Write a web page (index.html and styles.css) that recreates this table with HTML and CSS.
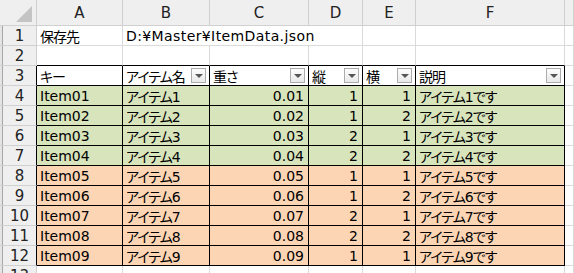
FILE: index.html
```html
<!DOCTYPE html>
<html lang="ja">
<head>
    <meta charset="utf-8">
    <title>ItemData</title>
    <link rel="stylesheet" href="styles.css">
</head>
<body>
    <div class="sheet">
        <!-- column headers -->
        <div class="corner">
            <svg width="16" height="16" viewBox="0 0 16 16"><polygon points="16,0 16,16 0,16" fill="#c4c4c4"/></svg>
        </div>
        <div class="col-head">A</div>
        <div class="col-head">B</div>
        <div class="col-head">C</div>
        <div class="col-head">D</div>
        <div class="col-head">E</div>
        <div class="col-head">F</div>
        <div class="col-head"></div>

        <!-- row 1: path -->
        <div class="row-head">1</div>
        <div class="cell jp">保存先</div>
        <div class="cell span3 path">D:¥Master¥ItemData.json</div>
        <div class="cell"></div>
        <div class="cell"></div>
        <div class="cell"></div>

        <!-- row 2 -->
        <div class="row-head">2</div>
        <div class="cell above"></div>
        <div class="cell above"></div>
        <div class="cell above"></div>
        <div class="cell above"></div>
        <div class="cell above"></div>
        <div class="cell above"></div>
        <div class="cell"></div>

        <!-- row 3: table header -->
        <div class="row-head tbl-edge">3</div>
        <div class="cell t jp">キー</div>
        <div class="cell t jp">アイテム名<span class="filter"></span></div>
        <div class="cell t jp">重さ<span class="filter"></span></div>
        <div class="cell t jp">縦<span class="filter"></span></div>
        <div class="cell t jp">横<span class="filter"></span></div>
        <div class="cell t jp">説明<span class="filter"></span></div>
        <div class="cell"></div>

        <div class="row-head tbl-edge">4</div>
        <div class="cell t green">Item01</div>
        <div class="cell t green jp">アイテム1</div>
        <div class="cell t green num">0.01</div>
        <div class="cell t green num">1</div>
        <div class="cell t green num">1</div>
        <div class="cell t green jp">アイテム1です</div>
        <div class="cell"></div>

        <div class="row-head tbl-edge">5</div>
        <div class="cell t green">Item02</div>
        <div class="cell t green jp">アイテム2</div>
        <div class="cell t green num">0.02</div>
        <div class="cell t green num">1</div>
        <div class="cell t green num">2</div>
        <div class="cell t green jp">アイテム2です</div>
        <div class="cell"></div>

        <div class="row-head tbl-edge">6</div>
        <div class="cell t green">Item03</div>
        <div class="cell t green jp">アイテム3</div>
        <div class="cell t green num">0.03</div>
        <div class="cell t green num">2</div>
        <div class="cell t green num">1</div>
        <div class="cell t green jp">アイテム3です</div>
        <div class="cell"></div>

        <div class="row-head tbl-edge">7</div>
        <div class="cell t green">Item04</div>
        <div class="cell t green jp">アイテム4</div>
        <div class="cell t green num">0.04</div>
        <div class="cell t green num">2</div>
        <div class="cell t green num">2</div>
        <div class="cell t green jp">アイテム4です</div>
        <div class="cell"></div>

        <div class="row-head tbl-edge">8</div>
        <div class="cell t orange">Item05</div>
        <div class="cell t orange jp">アイテム5</div>
        <div class="cell t orange num">0.05</div>
        <div class="cell t orange num">1</div>
        <div class="cell t orange num">1</div>
        <div class="cell t orange jp">アイテム5です</div>
        <div class="cell"></div>

        <div class="row-head tbl-edge">9</div>
        <div class="cell t orange">Item06</div>
        <div class="cell t orange jp">アイテム6</div>
        <div class="cell t orange num">0.06</div>
        <div class="cell t orange num">1</div>
        <div class="cell t orange num">2</div>
        <div class="cell t orange jp">アイテム6です</div>
        <div class="cell"></div>

        <div class="row-head tbl-edge">10</div>
        <div class="cell t orange">Item07</div>
        <div class="cell t orange jp">アイテム7</div>
        <div class="cell t orange num">0.07</div>
        <div class="cell t orange num">2</div>
        <div class="cell t orange num">1</div>
        <div class="cell t orange jp">アイテム7です</div>
        <div class="cell"></div>

        <div class="row-head tbl-edge">11</div>
        <div class="cell t orange">Item08</div>
        <div class="cell t orange jp">アイテム8</div>
        <div class="cell t orange num">0.08</div>
        <div class="cell t orange num">2</div>
        <div class="cell t orange num">2</div>
        <div class="cell t orange jp">アイテム8です</div>
        <div class="cell"></div>

        <div class="row-head tbl-edge">12</div>
        <div class="cell t orange">Item09</div>
        <div class="cell t orange jp">アイテム9</div>
        <div class="cell t orange num">0.09</div>
        <div class="cell t orange num">1</div>
        <div class="cell t orange num">1</div>
        <div class="cell t orange jp">アイテム9です</div>
        <div class="cell"></div>

        <div class="row-head">13</div>
        <div class="cell"></div>
        <div class="cell"></div>
        <div class="cell"></div>
        <div class="cell"></div>
        <div class="cell"></div>
        <div class="cell"></div>
        <div class="cell"></div>
    </div>
</body>
</html>
```

FILE: styles.css
```css
body {
    margin: 0;
    background-color: white;
    overflow: hidden;
    font-family: "DejaVu Sans", "Noto Sans CJK JP", sans-serif;
    font-size: 14px;
    color: #000;
}

.sheet {
    display: grid;
    grid-template-columns: 37px 86px 87px 99px 54px 53px 149px 1fr;
    grid-template-rows: 26px;
    grid-auto-rows: 20px;
    width: 574px;
}

/* every cell draws its own right and bottom gridline */
.cell, .col-head, .row-head, .corner {
    box-sizing: border-box;
    border-right: 1px solid #dadada;
    border-bottom: 1px solid #dadada;
    display: flex;
    align-items: center;
    white-space: nowrap;
    overflow: hidden;
    font-feature-settings: "palt";
}

.cell {
    padding: 0 3px;
}

/* proportional kana are a bit tighter */
.jp {
    letter-spacing: -1px;
}
.path {
    letter-spacing: 0.4px;
}

.col-head, .row-head, .corner {
    background-color: #efefef;
    border-color: #d0d0d0;
    justify-content: center;
    color: #222;
    font-size: 15px;
}

.row-head {
    box-shadow: inset 2px 0 0 #e4e4e4, inset 3px 0 0 #a6a6a6;
    padding-left: 3px;
}

.corner {
    justify-content: flex-end;
    align-items: flex-end;
    padding: 0 4px 3px 0;
}
.corner svg {
    display: block;
}

.span3 {
    grid-column: span 3;
}

/* table borders */
.above {
    border-bottom-color: #000;
}
.t {
    border-right-color: #000;
    border-bottom-color: #000;
}
.tbl-edge {
    border-right-color: #000;
}

.green {
    background-color: #d8e4bc;
}
.orange {
    background-color: #fcd5b4;
}
.num {
    justify-content: flex-end;
    padding-right: 4px;
}

/* autofilter dropdown */
.filter {
    margin-left: auto;
    width: 15px;
    height: 15px;
    box-sizing: border-box;
    border: 1px solid #acacac;
    background: linear-gradient(#fdfdfd, #e9e9e9);
    display: flex;
    align-items: center;
    justify-content: center;
    flex-shrink: 0;
    letter-spacing: 0;
}
.filter::after {
    content: "";
    border-left: 4px solid transparent;
    border-right: 4px solid transparent;
    border-top: 4px solid #555;
}
```
